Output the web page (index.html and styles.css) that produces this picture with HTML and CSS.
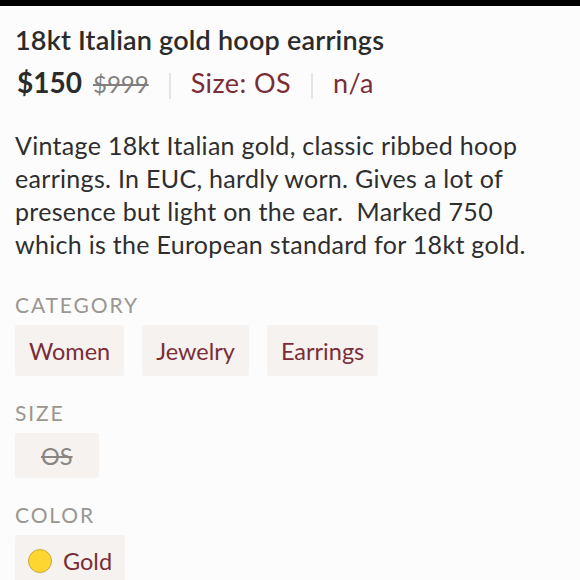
FILE: index.html
```html
<!DOCTYPE html>
<html>
<head>
<meta charset="utf-8">
<link rel="stylesheet" href="styles.css">
</head>
<body>
<div class="topbar"></div>
<main class="page">
  <h1 class="title">18kt Italian gold hoop earrings</h1>
  <div class="price-row">
    <span class="price">$150</span>
    <span class="orig">$999</span>
    <span class="sep"></span>
    <span class="meta">Size: OS</span>
    <span class="sep"></span>
    <span class="meta">n/a</span>
  </div>
  <p class="desc">Vintage 18kt Italian gold, classic ribbed hoop earrings. In EUC, hardly worn. Gives a lot of presence but light on the ear.&nbsp; Marked 750 which is the European standard for 18kt gold.</p>

  <section class="group group-first">
    <div class="label">CATEGORY</div>
    <div class="chips">
      <span class="chip">Women</span>
      <span class="chip">Jewelry</span>
      <span class="chip">Earrings</span>
    </div>
  </section>

  <section class="group">
    <div class="label">SIZE</div>
    <div class="chips">
      <span class="chip chip-size">OS</span>
    </div>
  </section>

  <section class="group">
    <div class="label">COLOR</div>
    <div class="chips">
      <span class="chip chip-color"><span class="dot"></span>Gold</span>
    </div>
  </section>
</main>
</body>
</html>
```

FILE: styles.css
```css
html, body {
  margin: 0;
  padding: 0;
  background: #fcfcfc;
}
body {
  font-family: Lato, "Noto Sans", sans-serif;
  color: #2a2a2a;
  overflow: hidden;
}
.topbar {
  height: 6px;
  background: #000;
}
.page {
  padding: 0 15px;
}
.title {
  margin: 18px 0 0;
  font-size: 27px;
  font-weight: 600;
  letter-spacing: 0.2px;
  line-height: 32px;
  color: #2b2b2b;
}
.price-row {
  display: flex;
  align-items: baseline;
  margin-top: 10px;
  height: 40px;
}
.price-row > span {
  line-height: 1.2;
}
.price {
  font-size: 28px;
  font-weight: 700;
  color: #2b2b2b;
  margin-left: 2px;
}
.orig {
  font-size: 24px;
  color: #7f7f7f;
  text-decoration: line-through;
  margin-left: 11px;
}
.price-row > .sep {
  align-self: center;
  width: 2px;
  height: 26px;
  background: #e8e4e1;
  margin: 0 20px;
}
.meta {
  font-size: 27px;
  letter-spacing: 0.4px;
  color: #7b2d37;
}
.desc {
  margin: 23px 0 0;
  font-size: 25px;
  letter-spacing: 0.3px;
  line-height: 33px;
  color: #2e2e2e;
}
.group {
  margin-top: 25px;
}
.group-first {
  margin-top: 32px;
}
.label {
  font-size: 21px;
  letter-spacing: 1.9px;
  color: #9a9691;
  line-height: 24px;
}
.chips {
  display: flex;
  gap: 18px;
  margin-top: 8px;
}
.chip {
  background: #f5f2ef;
  border-radius: 3px;
  color: #7b2d37;
  font-size: 23.5px;
  height: 51px;
  padding: 0 14px;
  display: flex;
  align-items: center;
}
.chip-size {
  height: 45px;
  padding: 0 26px;
  color: #8a8582;
  text-decoration: line-through;
}
.chip-color {
  height: 52px;
  padding: 0 13px;
}
.dot {
  box-sizing: border-box;
  width: 24px;
  height: 24px;
  border-radius: 50%;
  background: #fdd632;
  border: 1px solid #c9a93b;
  margin-right: 11px;
}
```
